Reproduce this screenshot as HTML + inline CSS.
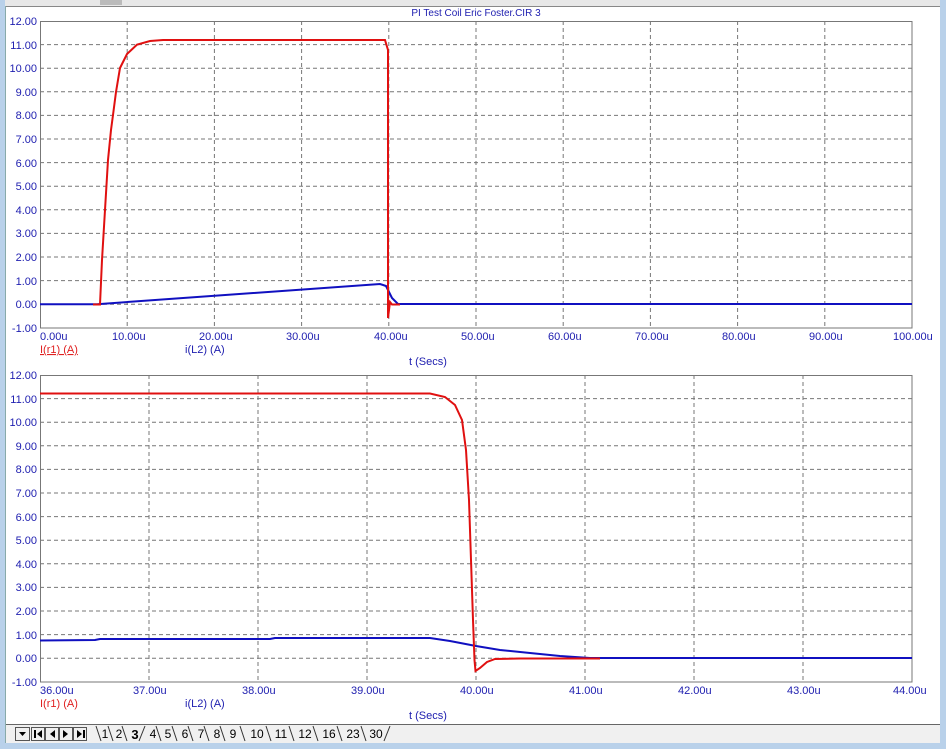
<!DOCTYPE html>
<html><head><meta charset="utf-8"><style>
body{margin:0;width:946px;height:749px;overflow:hidden;background:#fff;font-family:"Liberation Sans",Arial,sans-serif}
</style></head><body>
<svg width="946" height="749" xmlns="http://www.w3.org/2000/svg" font-family="Liberation Sans, Arial, sans-serif" font-size="11">
<rect x="0" y="0" width="946" height="749" fill="#fff"/>
<rect x="0" y="0" width="946" height="6" fill="#e8e8e8"/>
<line x1="0" y1="6.5" x2="946" y2="6.5" stroke="#888"/>
<rect x="100" y="0" width="22" height="5" fill="#bbb"/>
<rect x="0" y="0" width="5" height="749" fill="#b9d1ea"/>
<rect x="940" y="0" width="6" height="749" fill="#b9d1ea"/>
<rect x="0" y="743" width="946" height="6" fill="#b9d1ea"/>
<line x1="5.5" y1="6" x2="5.5" y2="743" stroke="#8aa"/>

<text x="476" y="16" fill="#2020b0" text-anchor="middle" font-size="10">PI Test Coil Eric Foster.CIR 3</text>

<!-- top plot -->
<g stroke="#777" stroke-dasharray="4,3" stroke-width="1">
<path d="M40 44.6H912M40 68.2H912M40 91.8H912M40 115.4H912M40 139H912M40 162.6H912M40 186.2H912M40 209.8H912M40 233.4H912M40 257H912M40 280.6H912M40 304.2H912"/>
<path d="M127.2 21V328M214.4 21V328M301.6 21V328M388.8 21V328M476 21V328M563.2 21V328M650.4 21V328M737.6 21V328M824.8 21V328"/>
</g>
<rect x="40.5" y="21.5" width="871.5" height="306.5" fill="none" stroke="#777"/>
<g fill="#2020b0" text-anchor="end">
<text x="37" y="25">12.00</text><text x="37" y="49">11.00</text><text x="37" y="72">10.00</text><text x="37" y="96">9.00</text><text x="37" y="119">8.00</text><text x="37" y="143">7.00</text><text x="37" y="167">6.00</text><text x="37" y="190">5.00</text><text x="37" y="214">4.00</text><text x="37" y="237">3.00</text><text x="37" y="261">2.00</text><text x="37" y="285">1.00</text><text x="37" y="308">0.00</text><text x="37" y="332">-1.00</text>
</g>
<g fill="#2020b0">
<text x="40" y="340">0.00u</text><text x="112" y="340">10.00u</text><text x="199" y="340">20.00u</text><text x="286" y="340">30.00u</text><text x="374" y="340">40.00u</text><text x="461" y="340">50.00u</text><text x="548" y="340">60.00u</text><text x="635" y="340">70.00u</text><text x="722" y="340">80.00u</text><text x="809" y="340">90.00u</text><text x="893" y="340">100.00u</text>
<text x="185" y="353">i(L2) (A)</text><text x="409" y="365">t (Secs)</text>
</g>
<text x="40" y="353" fill="#e02020" text-decoration="underline">I(r1) (A)</text>
<path d="M40 304.2H97L380 284L386 286L392 298L398 304L912 304" fill="none" stroke="#1010c0" stroke-width="2"/>
<path d="M93 304.5H100L102 260L105 210L108 160L111 130L113 115L116 92L120 68L127 54L137 44.6L150 41L163 40L385 40L388 50L388 318L390 302L392 304.5L400 304.5" fill="none" stroke="#e01010" stroke-width="2"/>

<!-- bottom plot -->
<g stroke="#777" stroke-dasharray="4,3" stroke-width="1">
<path d="M40 398.6H912M40 422.2H912M40 445.8H912M40 469.4H912M40 493H912M40 516.6H912M40 540.2H912M40 563.8H912M40 587.4H912M40 611H912M40 634.6H912M40 658.2H912"/>
<path d="M149 375V682M258 375V682M367 375V682M476 375V682M585 375V682M694 375V682M803 375V682"/>
</g>
<rect x="40.5" y="375.5" width="871.5" height="306.5" fill="none" stroke="#777"/>
<g fill="#2020b0" text-anchor="end">
<text x="37" y="379">12.00</text><text x="37" y="403">11.00</text><text x="37" y="426">10.00</text><text x="37" y="450">9.00</text><text x="37" y="473">8.00</text><text x="37" y="497">7.00</text><text x="37" y="521">6.00</text><text x="37" y="544">5.00</text><text x="37" y="568">4.00</text><text x="37" y="591">3.00</text><text x="37" y="615">2.00</text><text x="37" y="639">1.00</text><text x="37" y="662">0.00</text><text x="37" y="686">-1.00</text>
</g>
<g fill="#2020b0">
<text x="40" y="694">36.00u</text><text x="133" y="694">37.00u</text><text x="242" y="694">38.00u</text><text x="351" y="694">39.00u</text><text x="460" y="694">40.00u</text><text x="569" y="694">41.00u</text><text x="678" y="694">42.00u</text><text x="787" y="694">43.00u</text><text x="893" y="694">44.00u</text>
<text x="185" y="707">i(L2) (A)</text><text x="409" y="719">t (Secs)</text>
</g>
<text x="40" y="707" fill="#e02020">I(r1) (A)</text>
<path d="M40 640.5L95 640L100 639L270 639L275 638L430 638L450 641L476 646L500 650L530 653L560 656L590 658L912 658" fill="none" stroke="#1010c0" stroke-width="2"/>
<path d="M40 393.5L430 393.5L445 397L455 405L462 420L466 450L469 500L471 560L473 620L474.5 660L475.5 671L480 668L487 662L495 659L520 658.5L600 658.5" fill="none" stroke="#e01010" stroke-width="2"/>

<!-- tab bar -->
<rect x="6" y="724" width="934" height="19" fill="#f0f0f0"/>
<line x1="6" y1="724.5" x2="940" y2="724.5" stroke="#666"/>
<g fill="#f0f0f0" stroke="#555">
<rect x="15.5" y="727.5" width="14" height="13"/><rect x="31.5" y="727.5" width="13" height="13"/><rect x="45.5" y="727.5" width="13" height="13"/><rect x="59.5" y="727.5" width="13" height="13"/><rect x="73.5" y="727.5" width="13" height="13"/>
</g>
<g fill="#000">
<path d="M19 732h7l-3.5 4z"/><rect x="34" y="730" width="2" height="8"/><path d="M42 730v8l-5-4z"/><path d="M55 730v8l-5-4z"/><path d="M63 730v8l5-4z"/><path d="M77 730v8l5-4z"/><rect x="83" y="730" width="2" height="8"/>
</g>
<path d="M96 726L101 741M108 726L113 741M122 726L127 741M139 741L145 726M156 726L161 741M172 726L177 741M188 726L193 741M204 726L209 741M220 726L225 741M240 726L245 741M266 726L271 741M289 726L294 741M313 726L318 741M337 726L342 741M361 726L366 741M384 741L390 726" stroke="#333" fill="none"/>
<g font-size="12" fill="#000" text-anchor="middle">
<text x="105" y="738">1</text><text x="119" y="738">2</text><text x="135" y="739" font-weight="bold" font-size="13">3</text><text x="153" y="738">4</text><text x="168" y="738">5</text><text x="185" y="738">6</text><text x="201" y="738">7</text><text x="217" y="738">8</text><text x="233" y="738">9</text><text x="257" y="738">10</text><text x="281" y="738">11</text><text x="305" y="738">12</text><text x="329" y="738">16</text><text x="353" y="738">23</text><text x="376" y="738">30</text>
</g>
</svg>
</body></html>
